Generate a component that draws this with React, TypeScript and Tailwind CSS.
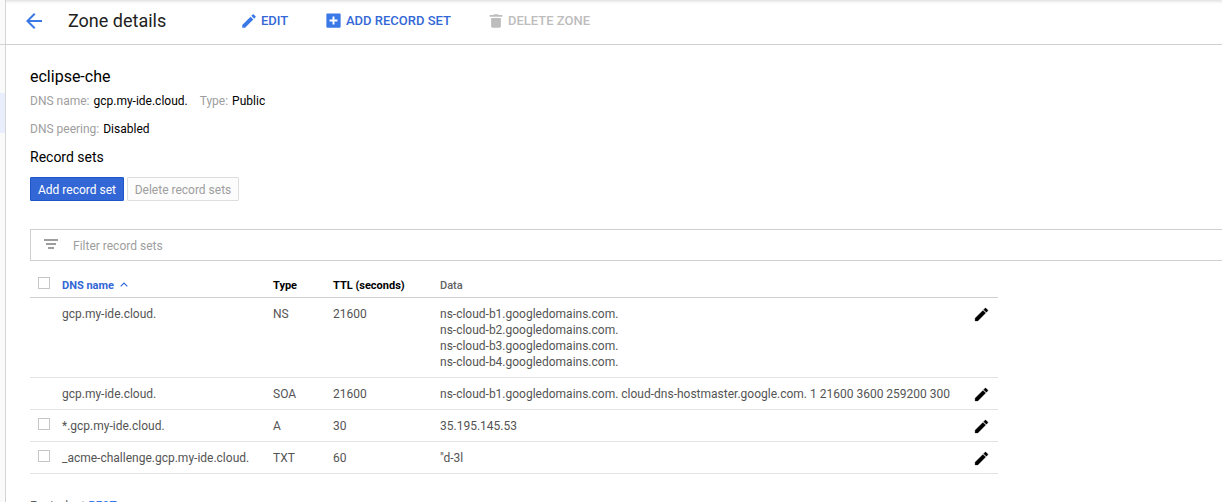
const records = [
  {
    name: 'gcp.my-ide.cloud.',
    type: 'NS',
    ttl: '21600',
    data: [
      'ns-cloud-b1.googledomains.com.',
      'ns-cloud-b2.googledomains.com.',
      'ns-cloud-b3.googledomains.com.',
      'ns-cloud-b4.googledomains.com.',
    ],
    selectable: false,
  },
  {
    name: 'gcp.my-ide.cloud.',
    type: 'SOA',
    ttl: '21600',
    data: ['ns-cloud-b1.googledomains.com. cloud-dns-hostmaster.google.com. 1 21600 3600 259200 300'],
    selectable: false,
  },
  { name: '*.gcp.my-ide.cloud.', type: 'A', ttl: '30', data: ['35.195.145.53'], selectable: true },
  { name: '_acme-challenge.gcp.my-ide.cloud.', type: 'TXT', ttl: '60', data: ['"d-3l'], selectable: true },
];

const COLUMNS = 'grid grid-cols-[32px_211px_60px_107px_535px_23px]';

function Icon({ path, className }: { path: string; className: string }) {
  return (
    <svg viewBox="0 0 24 24" fill="currentColor" aria-hidden="true" className={`shrink-0 ${className}`}>
      <path d={path} />
    </svg>
  );
}

const PENCIL =
  'M3 17.25V21h3.75L17.81 9.94l-3.75-3.75L3 17.25zM20.71 7.04a1 1 0 0 0 0-1.41l-2.34-2.34a1 1 0 0 0-1.41 0l-1.83 1.83 3.75 3.75 1.83-1.83z';
const BACK = 'M20 11H7.83l5.59-5.59L12 4l-8 8 8 8 1.41-1.41L7.83 13H20v-2z';
const ADD_BOX =
  'M20 3H4a1 1 0 0 0-1 1v16a1 1 0 0 0 1 1h16a1 1 0 0 0 1-1V4a1 1 0 0 0-1-1zm-3 10.2h-3.8V17h-2.4v-3.8H7v-2.4h3.8V7h2.4v3.8H17v2.4z';
const TRASH = 'M5.5 19c0 1.1.9 2 2 2h9c1.1 0 2-.9 2-2V8h-13v11zM20.5 4h-5l-1-1h-5l-1 1h-5v2.300h17V4z';

function Checkbox() {
  return <span className="ml-2 block size-3 border border-[#c6c6c6] bg-white" />;
}

export default function App() {
  return (
    <div className="flex h-[502px] w-[1222px] overflow-hidden bg-white font-['Roboto',sans-serif] text-xs leading-4 text-black">
      <aside className="w-[6px] shrink-0 border-r border-[#d4d4d4] bg-[#fafafa]">
        <div className="h-[45px] border-b border-[#d4d4d4]" />
        <div className="mt-[48px] h-10 bg-[#e8eefc]" />
      </aside>
      <main className="min-w-0 flex-1">
        <header className="flex h-[45px] items-center border-b border-[#d0d0d0] bg-[linear-gradient(#e2e2e2,#f4f4f4_2px,#fff_4px)] pb-[3px] font-medium">
          <Icon path={BACK} className="ml-4 size-6 text-[#3b78e7]" />
          <h1 className="ml-[22px] w-[172px] text-[18px] leading-6 font-normal text-[#212121]">Zone details</h1>
          <button className="flex w-[84px] items-center gap-[3px] text-[13px] text-[#3367d6]">
            <Icon path={PENCIL} className="size-[18px] text-[#3b78e7]" />
            EDIT
          </button>
          <button className="flex w-[163px] items-center gap-[3px] text-[13px] text-[#3367d6]">
            <Icon path={ADD_BOX} className="size-[19px] text-[#3b78e7]" />
            ADD RECORD SET
          </button>
          <button className="flex items-center gap-[3px] text-[13px] text-[#bdbdbd]">
            <Icon path={TRASH} className="size-[18px]" />
            DELETE ZONE
          </button>
        </header>
        <div className="pl-6">
          <h2 className="mt-[22px] text-[16px] leading-5">eclipse-che</h2>
          <div className="mt-[6px] flex gap-3">
            <p><span className="mr-px text-[#9e9e9e]">DNS name:</span> gcp.my-ide.cloud.</p>
            <p><span className="mr-px text-[#9e9e9e]">Type:</span> Public</p>
          </div>
          <p className="mt-3"><span className="mr-px text-[#9e9e9e]">DNS peering:</span> Disabled</p>
          <h3 className="mt-[10px] text-[14px] leading-5">Record sets</h3>
          <div className="mt-[10px] flex gap-[3px]">
            <button className="h-6 w-[94px] rounded-[1px] border border-[#1f57c9] bg-[#3367d6] pt-px text-white">Add record set</button>
            <button className="h-6 w-[112px] rounded-[1px] border border-[#dedede] bg-[#fcfcfc] pt-px text-[#9e9e9e]">Delete record sets</button>
          </div>
          <div className="mt-7 flex h-8 items-center border border-r-0 border-[#cfcfcf] text-[#9e9e9e]">
            <svg viewBox="0 0 14 10" fill="currentColor" aria-hidden="true" className="-mt-[3px] ml-[13px] h-[10px] w-[14px]">
              <path d="M0 0h14v2H0zM2 4h10v2H2zM4 8h6v2H4z" />
            </svg>
            <span className="ml-[15px] pt-[2px]">Filter record sets</span>
          </div>
          <div className="w-[968px]">
            <div className={`${COLUMNS} h-[37px] items-start border-b border-[#cfcfcf] pt-4 text-[11px] leading-[18px] font-bold`}>
              <Checkbox />
              <span className="flex items-center gap-[6px] text-[#3367d6]">
                DNS name
                <svg viewBox="0 0 8 5" className="mb-[3px] h-[5px] w-2" fill="none" stroke="currentColor" strokeWidth="1.2"><path d="M.7 4.3 4 1l3.300 3.300" /></svg>
              </span>
              <span>Type</span>
              <span>TTL (seconds)</span>
              <span className="font-medium text-[#616161]">Data</span>
            </div>
            {records.map((r) => (
              <div key={r.type} className={`${COLUMNS} border-b border-[#e3e3e3] pt-2 pb-[7px] text-[#545454]`}>
                <div>{r.selectable && <Checkbox />}</div>
                <span>{r.name}</span>
                <span>{r.type}</span>
                <span>{r.ttl}</span>
                <div>{r.data.map((d) => <p key={d} className="whitespace-nowrap">{d}</p>)}</div>
                <Icon path={PENCIL} className="-mb-px -ml-[2px] size-[17px] stroke-black stroke-[0.5] text-black" />
              </div>
            ))}
          </div>
          <p className="mt-6 text-[#616161]">Equivalent <a className="text-[#3b78e7]">REST</a></p>
        </div>
      </main>
    </div>
  );
}
